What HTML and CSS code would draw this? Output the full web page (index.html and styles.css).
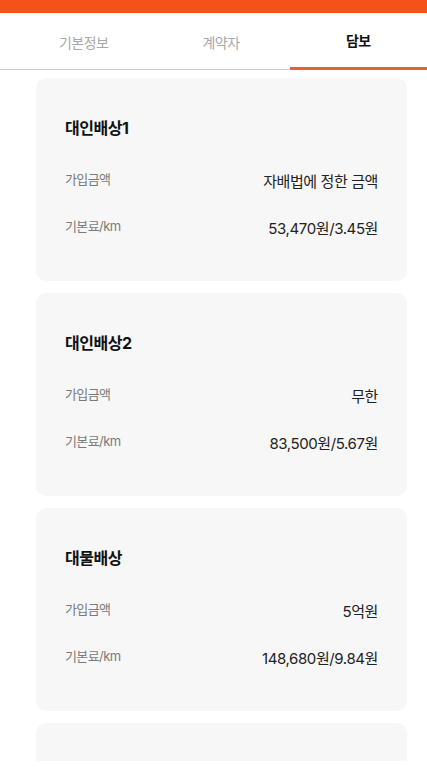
FILE: index.html
```html
<!DOCTYPE html>
<html lang="ko">
<head>
    <meta charset="UTF-8">
    <meta name="viewport" content="width=device-width, initial-scale=1.0">
    <title>담보</title>
    <link rel="stylesheet" href="styles.css">
</head>
<body>
    <div class="top-bar"></div>
    <nav class="tabs">
        <a class="tab">기본정보</a>
        <a class="tab">계약자</a>
        <a class="tab active">담보</a>
    </nav>

    <div class="content">
        <div class="card">
            <h2>대인배상1</h2>
            <div class="row">
                <span class="label">가입금액</span>
                <span class="value">자배법에 정한 금액</span>
            </div>
            <div class="row">
                <span class="label">기본료/km</span>
                <span class="value">53,470원/3.45원</span>
            </div>
        </div>

        <div class="card">
            <h2>대인배상2</h2>
            <div class="row">
                <span class="label">가입금액</span>
                <span class="value">무한</span>
            </div>
            <div class="row">
                <span class="label">기본료/km</span>
                <span class="value">83,500원/5.67원</span>
            </div>
        </div>

        <div class="card">
            <h2>대물배상</h2>
            <div class="row">
                <span class="label">가입금액</span>
                <span class="value">5억원</span>
            </div>
            <div class="row">
                <span class="label">기본료/km</span>
                <span class="value">148,680원/9.84원</span>
            </div>
        </div>

        <!-- next card, scrolled below the fold -->
        <div class="card"></div>
    </div>
</body>
</html>
```

FILE: styles.css
```css
body {
    margin: 0;
    font-family: Inter, "Noto Sans CJK KR", sans-serif;
    background: #fff;
    color: #222;
    height: 776px;
    overflow: hidden;
}
.top-bar {
    height: 13px;
    background-color: #f35219;
}
.tabs {
    display: flex;
    height: 56px;
    padding-left: 15px;
    border-bottom: 1px solid #cfcfcf;
}
.tab {
    flex: 1;
    display: flex;
    align-items: center;
    justify-content: center;
    font-size: 14px;
    color: #a8a8a8;
    letter-spacing: -0.5px;
    margin-bottom: -1px;
}
.tab.active {
    color: #111;
    font-weight: bold;
    border-bottom: 3px solid #e8602c;
    border-radius: 2px 2px 0 0;
}
.content {
    box-sizing: border-box;
    height: 691px;
    overflow: hidden;
    padding: 8px 20px 0 36px;
}
.card {
    width: 371px;
    box-sizing: border-box;
    height: 203px;
    background: #f7f7f7;
    border-radius: 10px;
    padding: 38px 29px 0 29px;
    margin-bottom: 12px;
}
.card h2 {
    margin: 0 0 17px;
    font-size: 16px;
    font-weight: bold;
    color: #111;
    letter-spacing: -0.5px;
    line-height: 24px;
}
.row {
    display: flex;
    justify-content: space-between;
    align-items: center;
    height: 47px;
}
.label {
    font-size: 13px;
    color: #7a7a7a;
    letter-spacing: -0.6px;
    margin-top: -5px;
}
.value {
    font-size: 15px;
    color: #222;
    letter-spacing: -0.4px;
}
```
